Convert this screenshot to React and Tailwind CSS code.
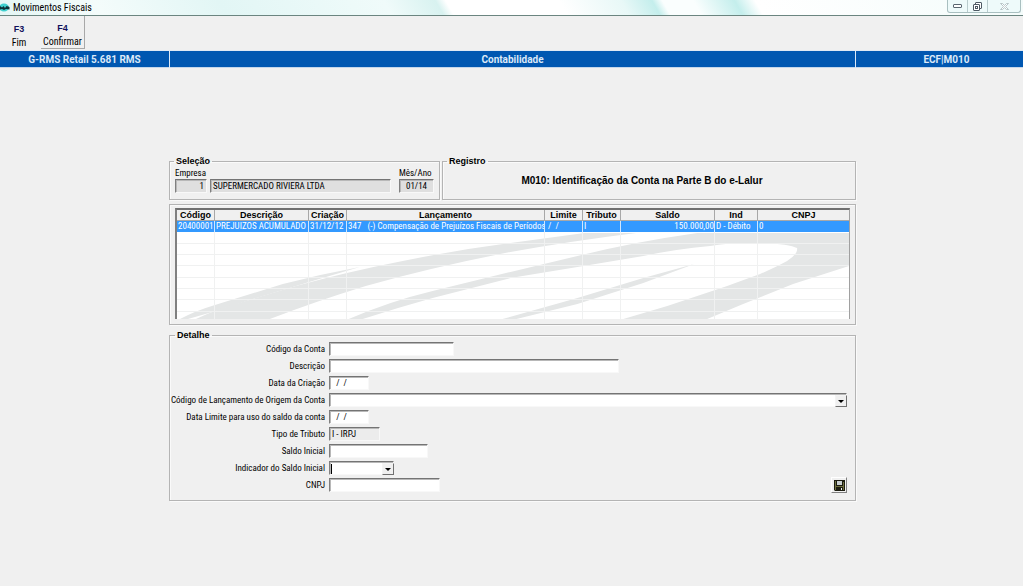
import React, { useState } from 'react';

const columns = [
  { label: 'Código', width: 'w-[38px]' },
  { label: 'Descrição', width: 'w-[94px]' },
  { label: 'Criação', width: 'w-[38px]' },
  { label: 'Lançamento', width: 'w-auto' },
  { label: 'Limite', width: 'w-[38px]' },
  { label: 'Tributo', width: 'w-[38px]' },
  { label: 'Saldo', width: 'w-[94px]' },
  { label: 'Ind', width: 'w-[43px]' },
  { label: 'CNPJ', width: 'w-[91px]' }
];

const contas = [
  [
    '20400001',
    'PREJUIZOS ACUMULADO',
    '31/12/12',
    '347   (-) Compensação de Prejuízos Fiscais de Períodos A',
    ' /  /',
    'I',
    '150.000,00',
    'D - Débito',
    '0'
  ]
];

const emptyRows = [0, 1, 2, 3, 4, 5, 6];

const sunken = 'block h-3.5 rounded-none border border-t-[#747474] border-l-[#808080] border-r-[#f8f8f8] border-b-[#f8f8f8] px-0.5 leading-none shadow-[inset_1px_1px_0_#b8b8b8] outline-none';

const Group = ({ title, className = '', titleClass = 'ml-1', children }) => (
  <fieldset className={`min-w-0 border border-[#b4b4b4] shadow-[inset_1px_1px_0_#fafafa,1px_1px_0_#fafafa] ${className}`}>
    {title && (
      <legend className={`px-0.5 font-['Liberation_Sans',sans-serif] text-[9px] leading-[10px] font-bold ${titleClass}`}>{title}</legend>
    )}
    {children}
  </fieldset>
);

const Field = ({ id, label, children, after }) => (
  <div className="flex h-3.5 items-center gap-1">
    <label htmlFor={id} className="w-[154px] shrink-0 text-right leading-[14px] whitespace-nowrap">{label}</label>
    {children}
    {after}
  </div>
);

const DropDown = ({ id, className, caret, children }) => (
  <div className={`relative ${className}`}>
    <select id={id} className={`${sunken} w-full appearance-none bg-white`}>
      {children}
    </select>
    {caret && <span className="pointer-events-none absolute top-[3px] left-0.5 h-2.5 w-px bg-black"></span>}
    <span className="pointer-events-none absolute top-[2px] right-0 flex h-3 w-3 items-center justify-center border border-t-[#f4f4f4] border-l-[#f4f4f4] border-r-[#707070] border-b-[#707070] bg-[#f0f0f0]">
      <svg viewBox="0 0 6 3" className="h-[3px] w-1.5"><path d="M0 0h6L3 3z" fill="#000" /></svg>
    </span>
  </div>
);

const TitleBar = () => (
  <header className="flex h-4 items-start justify-between border-b border-[#6b8580] bg-[linear-gradient(60deg,#e4f6f5_0%,#f4fcfb_10%,#e2f6f5_22%,#f0fbfa_38%,#d8f2f0_43%,#ffffff_44%,#ffffff_55%,#e8f8f7_61%,#c4eeec_64%,#fafefe_65%,#fafefe_68%,#c4eeec_72%,#ffffff_74%,#f4fcfb_100%)]">
    <div className="flex h-[15px] items-center gap-[3px]">
      <svg viewBox="0 0 10 9" className="h-[9px] w-2.5">
        <ellipse cx="4" cy="4.5" rx="5" ry="4" fill="#3fd0cf" />
        <path d="M0 3l2 1.500 1.500-1.500 1.500 2L6.500 3 9.500 4v2.500L6 6 4 7 2 6 0 6.500z" fill="#0d3138" />
      </svg>
      <h1 className="text-[10px] leading-[15px]">Movimentos Fiscais</h1>
    </div>
    <div className="mr-0.5 flex h-[13px] overflow-hidden rounded-b-[3px] border border-t-0 border-[#a9bfc0] bg-[#eefafa]">
      <button type="button" aria-label="Minimizar" className="flex w-5 items-center justify-center border-r border-[#b9cccd]">
        <svg viewBox="0 0 9 4" className="h-1 w-[9px]"><rect x=".5" y=".5" width="8" height="3" rx=".5" fill="#fff" stroke="#5a6670" /></svg>
      </button>
      <button type="button" aria-label="Restaurar" className="flex w-5 items-center justify-center border-r border-[#b9cccd]">
        <svg viewBox="0 0 9 9" className="h-[9px] w-[9px]" fill="#fff" stroke="#4d5963">
          <rect x="2.500" y=".5" width="6" height="6" rx=".5" />
          <rect x=".5" y="2.500" width="6" height="6" rx=".5" />
          <rect x="2.500" y="4.500" width="2" height="2" />
        </svg>
      </button>
      <button type="button" aria-label="Fechar" className="flex w-8 items-center justify-center">
        <svg viewBox="0 0 9 7" className="h-[7px] w-[9px]"><path d="M.5.500h2l2 2 2-2h2L5.500 3.500l3 3h-2l-2-2-2 2h-2l3-3z" fill="#fff" stroke="#a9b8bb" strokeWidth=".8" /></svg>
      </button>
    </div>
  </header>
);

const ToolButton = ({ shortcut, text, className }) => (
  <button type="button" className={`flex h-[33px] flex-col items-center justify-end gap-0.5 ${className}`}>
    <span className="font-['Liberation_Sans',sans-serif] text-[9px] leading-3 font-bold text-[#10105c]">{shortcut}</span>
    <span className="text-[10px] leading-3">{text}</span>
  </button>
);

// Background swoosh of the grid
const Watermark = () => (
  <svg viewBox="0 0 673 87" preserveAspectRatio="none" className="pointer-events-none absolute inset-x-0 bottom-0 h-[87px] w-full" fill="#e4e6e6">
    <path d="M3 87Q18 79 38 73L106 52Q145 42 183 35L129 51 76 67 39 79 11 87z" />
    <path d="M19 87Q42 76 69 69L119 54Q170 40 226 29 280 18 334 11L408 1H460Q395 9 334 20 256 35 189 54 140 69 93 87z" />
    <path d="M172 87Q214 69 256 59L334 40 401 24Q457 10 521 1H673V34L617 52 567 72 531 87H447L491 74 551 54Q570 47 584 42 600 35 611 29 622 22 621 16 612 11 574 11 550 11 534 14 500 17 467 24L401 35 334 46 256 66Q220 76 186 87z" />
    <path d="M326 87L401 66 467 46 518 32 467 51 401 72 340 87z" />
  </svg>
);

const ContasTable = () => (
  <div className="relative overflow-hidden border-t-2 border-r border-l-2 border-t-[#707070] border-r-[#a0a0a0] border-l-[#808080] bg-white">
    <Watermark />
    <table className="relative h-[109px] w-full table-fixed border-separate border-spacing-0">
      <thead>
        <tr>
          {columns.map((col) => (
            <th key={col.label} className={`${col.width} h-[11px] border-r border-b border-[#a8a8a8] bg-[#f0f0f0] p-0 text-center font-['Liberation_Sans',sans-serif] text-[9px] leading-[10px] font-bold last:border-r-0`}>
              {col.label}
            </th>
          ))}
        </tr>
      </thead>
      <tbody>
        {contas.map((row) => (
          <tr key={row[0]} className="bg-[#3399ff] text-white">
            {row.map((value, i) => (
              <td
                key={i}
                className={`h-[11px] overflow-hidden border-r border-[#cfe6ff] py-0 pr-0 leading-[11px] whitespace-pre last:border-r-0 ${i === 6 ? 'text-right' : 'pl-px'}`}
              >
                {value}
              </td>
            ))}
          </tr>
        ))}
        {emptyRows.map((n) => (
          <tr key={n}>
            {columns.map((col) => (
              <td key={col.label} className="h-[11px] border-r border-b border-[#f0f1f1] p-0 last:border-r-0"></td>
            ))}
          </tr>
        ))}
        <tr>
          {columns.map((col) => (
            <td key={col.label} className="h-[7px] border-r border-[#f0f1f1] p-0 last:border-r-0"></td>
          ))}
        </tr>
      </tbody>
    </table>
  </div>
);

const App = () => {
  const [form, setForm] = useState({
    codigo: '',
    descricao: '',
    criacao: '  /  /',
    limite: '  /  /',
    saldo: '',
    cnpj: ''
  });

  const handleChange = (e) => {
    const { name, value } = e.target;
    setForm((prev) => ({ ...prev, [name]: value }));
  };

  return (
    <div className="min-h-screen bg-[#f0f0f0] font-['Roboto_Condensed','Liberation_Sans',sans-serif] text-[9px] text-black">
      <TitleBar />
      <nav className="flex h-[34px] items-start">
        <ToolButton shortcut="F3" text="Fim" className="w-[38px]" />
        <ToolButton shortcut="F4" text="Confirmar" className="ml-[3px] w-11 border-r border-b border-[#a8a8a8]" />
      </nav>
      <div className="grid h-[18px] grid-cols-[169px_1fr_167px] border-t border-b border-t-[#dfe9f4] border-b-[#c4d6ea] bg-[#0057b1] text-center font-['Roboto','Liberation_Sans',sans-serif] text-[10px] leading-[17px] font-bold text-[#dbe9f8]">
        <span>G-RMS Retail 5.681 RMS</span>
        <span className="border-x border-[#dbe9f8]">Contabilidade</span>
        <span className="pl-3.5">ECF|M010</span>
      </div>

      <main className="pt-[88px] pr-[167px] pl-[169px]">
        <div className="grid grid-cols-[271px_1fr] gap-0.5">
          <Group title="Seleção" titleClass="-ml-px" className="px-[5px] pb-1.5">
            <div className="flex items-end pt-0.5">
              <div className="mr-[3px] w-8">
                <label htmlFor="empresa" className="mb-px block leading-[10px]">Empresa</label>
                <input id="empresa" readOnly value="1" className={`${sunken} w-full bg-[#dfdfdf] text-right`} />
              </div>
              <input aria-label="Nome da empresa" readOnly value="SUPERMERCADO RIVIERA LTDA" className={`${sunken} mr-2 min-w-0 flex-1 bg-[#dfdfdf]`} />
              <div className="w-[35px]">
                <label htmlFor="mesAno" className="mb-px block leading-[10px] whitespace-nowrap">Mês/Ano</label>
                <input id="mesAno" readOnly value="01/14" className={`${sunken} w-full bg-[#dfdfdf] text-center`} />
              </div>
            </div>
          </Group>
          <Group title="Registro">
            <h2 className="pt-[9px] pr-3.5 text-center font-['Liberation_Sans',sans-serif] text-[10px] leading-3 font-bold">
              M010: Identificação da Conta na Parte B do e-Lalur
            </h2>
          </Group>
        </div>

        <Group className="mt-1 px-[5px] pt-[3px] pb-[5px]">
          <ContasTable />
        </Group>

        <Group title="Detalhe" className="mt-[5px] pr-2 pb-2 pl-px">
          <form className="flex flex-col gap-[3px] pt-0.5" onSubmit={(e) => e.preventDefault()}>
            <Field id="codigo" label="Código da Conta">
              <input id="codigo" name="codigo" value={form.codigo} onChange={handleChange} className={`${sunken} w-[125px] bg-white`} />
            </Field>
            <Field id="descricao" label="Descrição">
              <input id="descricao" name="descricao" value={form.descricao} onChange={handleChange} className={`${sunken} w-[290px] bg-white`} />
            </Field>
            <Field id="criacao" label="Data da Criação">
              <input id="criacao" name="criacao" value={form.criacao} onChange={handleChange} className={`${sunken} w-10 bg-white`} />
            </Field>
            <Field id="origem" label="Código de Lançamento de Origem da Conta">
              <DropDown id="origem" className="flex-1">
                <option></option>
              </DropDown>
            </Field>
            <Field id="limite" label="Data Limite para uso do saldo da conta">
              <input id="limite" name="limite" value={form.limite} onChange={handleChange} className={`${sunken} w-10 bg-white`} />
            </Field>
            <Field id="tributo" label="Tipo de Tributo">
              <input id="tributo" readOnly value="I - IRPJ" className={`${sunken} w-[51px] bg-[#ececec]`} />
            </Field>
            <Field id="saldo" label="Saldo Inicial">
              <input id="saldo" name="saldo" value={form.saldo} onChange={handleChange} className={`${sunken} w-[99px] bg-white`} />
            </Field>
            <Field id="indicador" label="Indicador do Saldo Inicial">
              <DropDown id="indicador" className="w-[65px]" caret>
                <option></option>
              </DropDown>
            </Field>
            <Field
              id="cnpj"
              label="CNPJ"
              after={
                <button type="submit" aria-label="Gravar" className="ml-auto flex h-4 w-4 items-center justify-center border border-t-white border-l-white border-r-[#808080] border-b-[#808080] bg-[#f0f0f0]">
                  <svg viewBox="0 0 11 11" className="h-[11px] w-[11px]">
                    <path d="M0 0h11v11H1L0 10z" fill="#1c1c10" />
                    <path d="M1 1h1v9H1zM9 2h1v8H9zM2 6h7v1H2z" fill="#6f7040" />
                    <path d="M3 1h5v4H3z" fill="#c9cfd0" />
                    <path d="M7 8h1v2H7z" fill="#f0f0f0" />
                  </svg>
                </button>
              }
            >
              <input id="cnpj" name="cnpj" value={form.cnpj} onChange={handleChange} className={`${sunken} w-[111px] bg-white`} />
            </Field>
          </form>
        </Group>
      </main>
    </div>
  );
};

export default App;
